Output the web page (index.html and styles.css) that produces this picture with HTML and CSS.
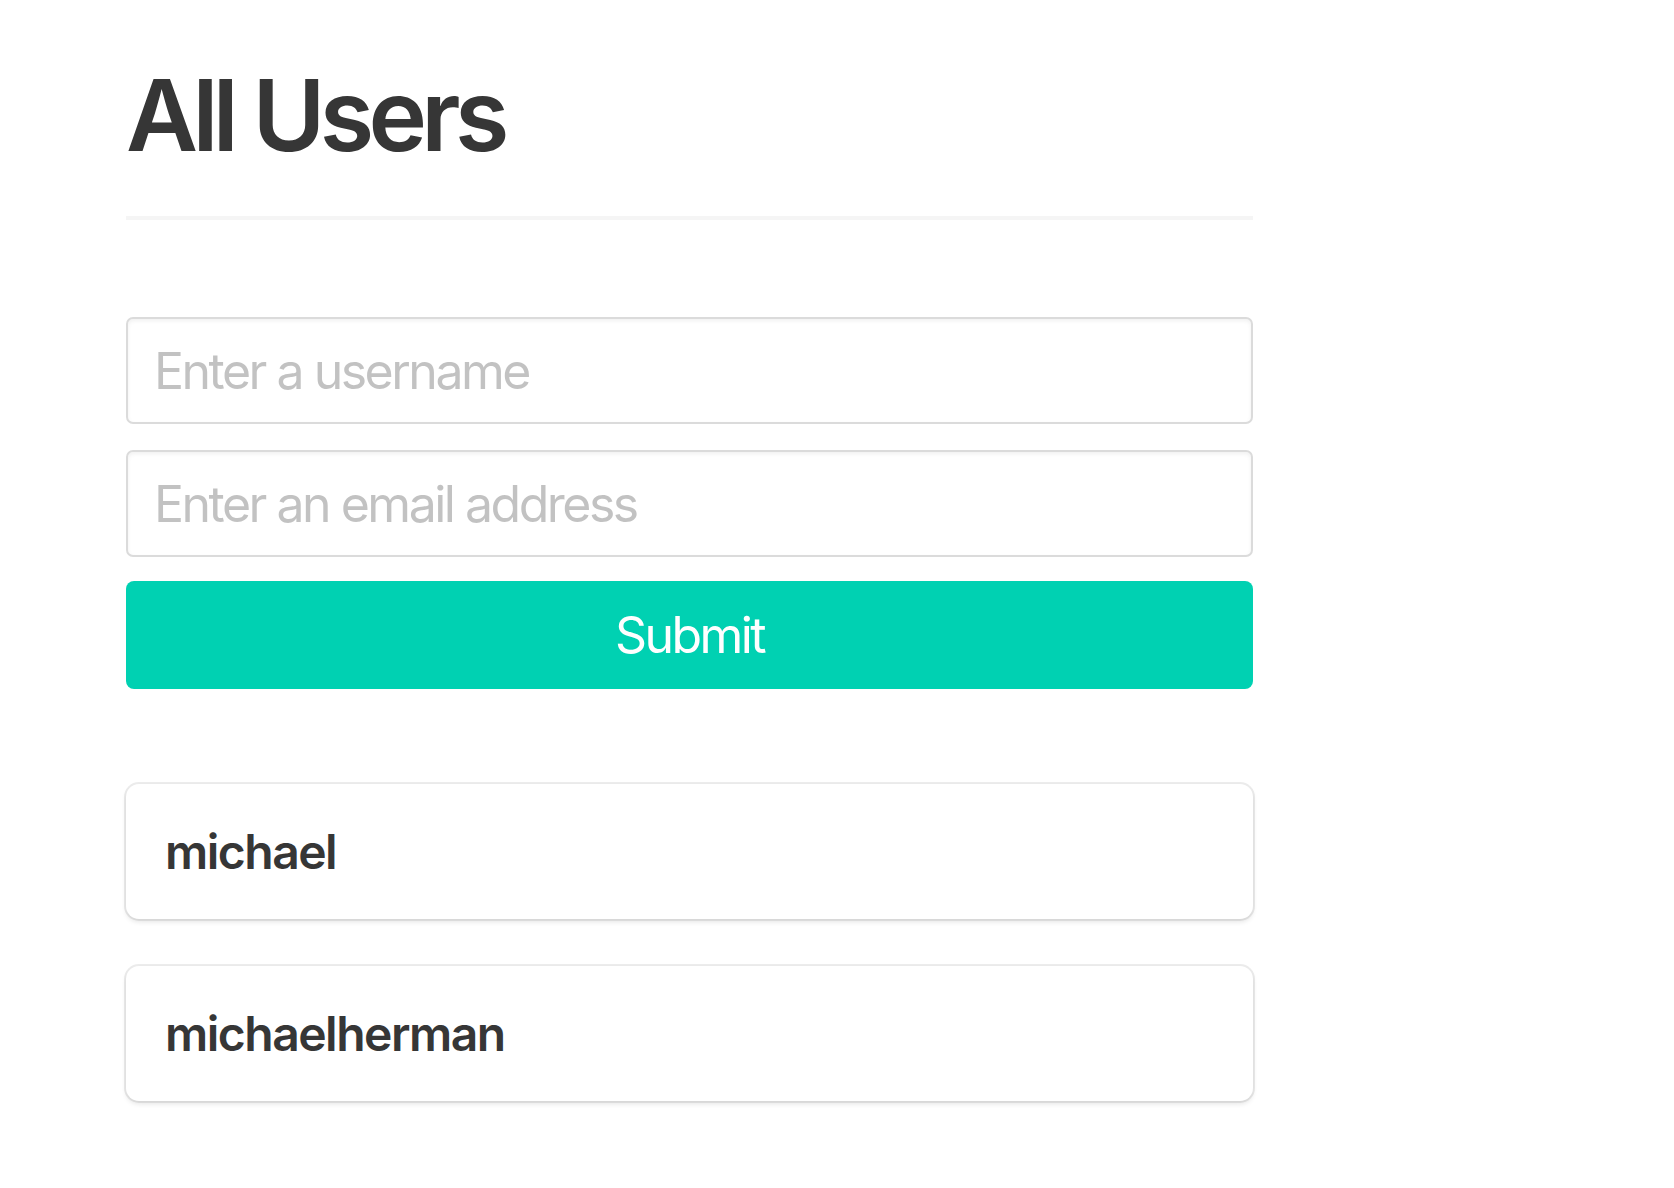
FILE: index.html
```html
<!DOCTYPE html>
<html lang="en">
<head>
<meta charset="utf-8">
<title>All Users</title>
<link rel="stylesheet" href="styles.css">
</head>
<body>
<section class="page">
  <h1 class="title">All Users</h1>
  <hr class="rule">
  <form class="form">
    <input class="input" type="text" placeholder="Enter a username">
    <input class="input" type="email" placeholder="Enter an email address">
    <button class="button" type="button">Submit</button>
  </form>
  <div class="list">
    <div class="box"><h4 class="name">michael</h4></div>
    <div class="box"><h4 class="name">michaelherman</h4></div>
  </div>
</section>
</body>
</html>
```

FILE: styles.css
```css
html, body {
  margin: 0;
  padding: 0;
  background: #ffffff;
}
body {
  font-family: Inter, "Noto Sans", "Liberation Sans", sans-serif;
  color: #363636;
}
.page {
  width: 1127px;
  margin-left: 126px;
  padding-top: 60px;
  padding-bottom: 40px;
}
.title {
  margin: 0;
  font-size: 99px;
  line-height: 1.125;
  font-weight: 600;
  color: #363636;
  letter-spacing: -5.6px;
}
.rule {
  margin: 45px 0 0;
  height: 4px;
  border: 0;
  background: #f5f5f5;
}
.form {
  margin-top: 97px;
  display: flex;
  flex-direction: column;
  gap: 26px;
}
.input {
  box-sizing: border-box;
  height: 107px;
  width: 100%;
  margin: 0;
  padding: 0 26px;
  border: 2px solid #dbdbdb;
  border-radius: 7px;
  box-shadow: inset 0 2px 4px rgba(10, 10, 10, 0.06);
  font-family: inherit;
  font-size: 50px;
  letter-spacing: -2.5px;
  color: #363636;
  background: #fff;
  outline: none;
}
.input::placeholder {
  color: rgba(54, 54, 54, 0.3);
}
.button {
  box-sizing: border-box;
  height: 108px;
  width: 100%;
  margin-top: -2px;
  border: 0;
  border-radius: 8px;
  background: #00d1b2;
  color: #fff;
  font-family: inherit;
  font-size: 50px;
  font-weight: 400;
  letter-spacing: -2.6px;
  cursor: pointer;
}
.list {
  margin-top: 95px;
  display: flex;
  flex-direction: column;
  gap: 47px;
}
.box {
  box-sizing: border-box;
  height: 135px;
  padding: 0 39px;
  display: flex;
  align-items: center;
  border-radius: 13px;
  background: #fff;
  box-shadow: 0 3px 5px rgba(10, 10, 10, 0.1), 0 0 0 2px rgba(10, 10, 10, 0.08);
}
.name {
  margin: 0;
  font-size: 48px;
  font-weight: 600;
  letter-spacing: -1.5px;
  color: #363636;
}
```
